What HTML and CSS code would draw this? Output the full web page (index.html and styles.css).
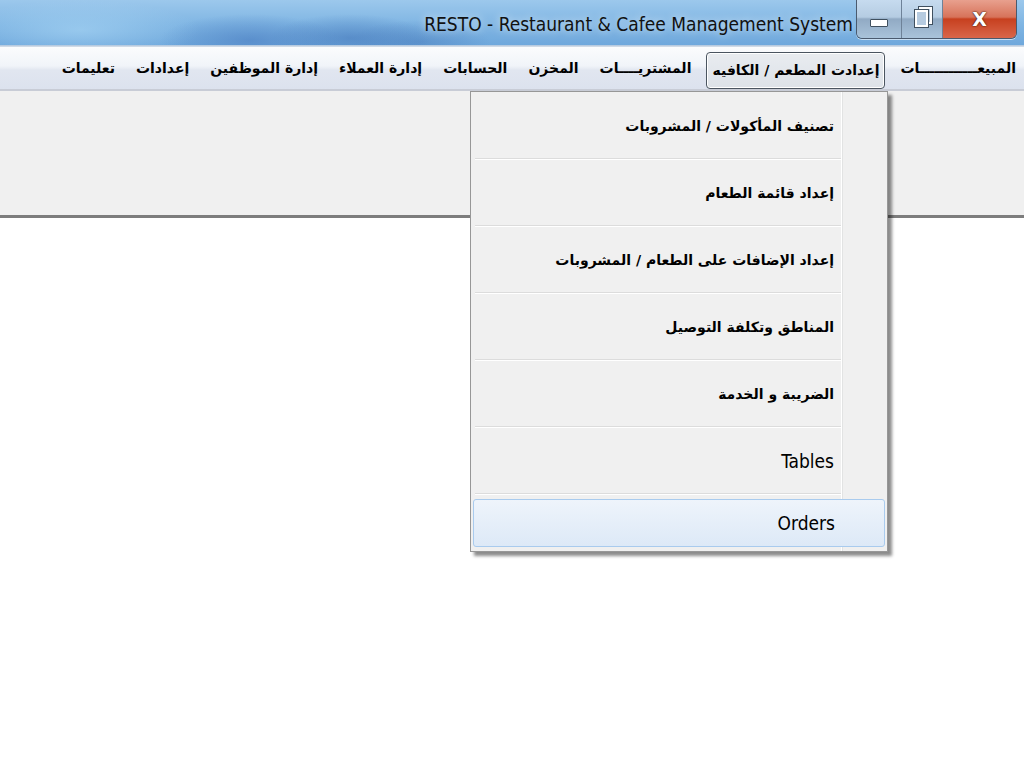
FILE: index.html
```html
<!DOCTYPE html>
<html lang="ar">
  <head>
    <meta charset="UTF-8" />
    <title>RESTO - Restaurant &amp; Cafee Management System</title>
    <link rel="stylesheet" href="styles.css">
  </head>
  <body>
    <div class="titlebar">
      <span class="title">RESTO - Restaurant &amp; Cafee Management System</span>
      <div class="win-buttons">
        <span class="win-btn btn-min"><i class="min-bar"></i></span>
        <span class="win-btn btn-restore"><i class="rest-back"></i><i class="rest-front"></i></span>
        <span class="win-btn btn-close">X</span>
      </div>
    </div>

    <div class="menubar" dir="rtl">
      <span class="menu-item">المبيعــــــــــــات</span>
      <span class="menu-item active">إعدادت المطعم / الكافيه</span>
      <span class="menu-item">المشتريــــات</span>
      <span class="menu-item">المخزن</span>
      <span class="menu-item">الحسابات</span>
      <span class="menu-item">إدارة العملاء</span>
      <span class="menu-item">إدارة الموظفين</span>
      <span class="menu-item">إعدادات</span>
      <span class="menu-item">تعليمات</span>
    </div>

    <div class="toolbar"></div>
    <div class="content"></div>

    <!-- dropdown of the open menu -->
    <div class="dropdown" dir="rtl">
      <div class="drop-item">تصنيف المأكولات / المشروبات</div>
      <div class="drop-item">إعداد قائمة الطعام</div>
      <div class="drop-item">إعداد الإضافات على الطعام / المشروبات</div>
      <div class="drop-item">المناطق وتكلفة التوصيل</div>
      <div class="drop-item">الضريبة و الخدمة</div>
      <div class="drop-item latin">Tables</div>
      <div class="drop-item latin hover">Orders</div>
    </div>
  </body>
</html>
```

FILE: styles.css
```css
:root {
  --panel-bg: #f0f0f0;
  --menu-text: #000;
  --menu-border: #979797;
  --sep-dark: #dcdcdc;
  --hover-border: #a9cbee;
  --narrow: "DejaVu Sans Condensed", "DejaVu Sans", sans-serif;
}
html,
body {
  margin: 0;
  height: 100%;
}
body {
  display: flex;
  flex-direction: column;
  background: #fff;
  font-family: "DejaVu Sans", sans-serif;
  overflow: hidden;
  position: relative;
}

/* Title bar (aero glass look) */
.titlebar {
  height: 45px;
  flex: none;
  display: flex;
  justify-content: flex-end;
  align-items: flex-start;
  padding-right: 7px;
  background:
    radial-gradient(ellipse 90px 26px at 250px 40px, rgba(70, 120, 190, 0.55), transparent),
    radial-gradient(ellipse 80px 24px at 350px 38px, rgba(60, 110, 180, 0.5), transparent),
    radial-gradient(ellipse 70px 22px at 420px 42px, rgba(70, 120, 185, 0.45), transparent),
    radial-gradient(ellipse 120px 30px at 80px 30px, rgba(170, 215, 245, 0.6), transparent),
    linear-gradient(#9cc8ec, #7fb5e3 55%, #6fa8dc);
  border-bottom: 1px solid #b7cbe0;
}
.title {
  font-family: var(--narrow);
  font-stretch: condensed;
  font-size: 19px;
  color: #111;
  margin-top: 13px;
  margin-right: 3px;
  text-shadow: 0 0 8px rgba(255, 255, 255, 0.8);
}
.win-buttons {
  display: flex;
  height: 38px;
  border: 1px solid #4a5a6e;
  border-top: none;
  border-radius: 0 0 6px 6px;
  overflow: hidden;
  box-shadow: 0 1px 0 rgba(255, 255, 255, 0.6);
}
.win-btn {
  display: flex;
  align-items: center;
  justify-content: center;
  height: 100%;
  position: relative;
}
.btn-min,
.btn-restore {
  width: 44px;
  background: linear-gradient(#c6dbef, #b5cce2 45%, #91aac4 50%, #a9c3da);
  border-right: 1px solid #6e8298;
}
.btn-restore {
  width: 40px;
}
.min-bar {
  width: 16px;
  height: 6px;
  margin-top: 8px;
  background: #fff;
  border: 1px solid #40505f;
  border-radius: 1px;
}
.rest-back,
.rest-front {
  position: absolute;
  width: 9px;
  height: 13px;
  border: 2px solid #fff;
  outline: 1px solid #40505f;
  background: #b6cbe0;
}
.rest-back {
  top: 7px;
  left: 17px;
}
.rest-front {
  top: 10px;
  left: 13px;
}
.btn-close {
  width: 73px;
  background: linear-gradient(#e8a08e, #d7735a 45%, #c7401f 50%, #d9664a);
  color: #fff;
  font-family: "DejaVu Sans", sans-serif;
  font-weight: bold;
  font-size: 19px;
  text-shadow: 0 0 2px #3a1a10, 0 0 1px #3a1a10;
}

/* Menu bar */
.menubar {
  height: 42px;
  flex: none;
  display: flex;
  align-items: center;
  gap: 9px;
  padding: 0 2px;
  border-top: 1px solid #d0dae6;
  background: linear-gradient(#fbfcfd, #f1f4f9 45%, #e1e6f0 55%, #dce2ee);
  border-bottom: 2px solid #c8ccd6;
}
.menu-item {
  font-size: 14px;
  font-weight: bold;
  color: var(--menu-text);
  padding: 9px 5px 10px;
  border: 1px solid transparent;
  border-radius: 4px;
  white-space: nowrap;
}
.menu-item.active {
  border-color: #4b5560;
  background: linear-gradient(#e9ecf0, #dde2e8);
  box-shadow: inset 0 0 0 1px #fff;
  margin-top: 4px;
}

/* Toolbar panel below the menu */
.toolbar {
  height: 124px;
  flex: none;
  background: var(--panel-bg);
  border-bottom: 3px solid #7d7d7d;
}
.content {
  flex: 1;
  background: #fff;
}

/* Dropdown */
.dropdown {
  position: absolute;
  left: 470px;
  top: 91px;
  width: 412px;
  padding: 2px;
  background: var(--panel-bg);
  border: 1px solid var(--menu-border);
  box-shadow: 4px 4px 3px rgba(0, 0, 0, 0.45);
  background-image: linear-gradient(to left, transparent 44px, #e2e3e3 44px, #e2e3e3 45px, #fff 45px, #fff 46px, transparent 46px);
}
.drop-item {
  height: 64px;
  display: flex;
  align-items: center;
  padding-right: 7px;
  font-size: 14px;
  font-weight: bold;
  color: #000;
  border-bottom: 1px solid var(--sep-dark);
  box-shadow: 0 1px 0 #fff;
  margin: 0 44px 2px 2px;
}
.drop-item:last-child {
  border-bottom: none;
  box-shadow: none;
}
.drop-item.latin {
  font-family: var(--narrow);
  font-stretch: condensed;
  font-weight: normal;
  font-size: 19px;
}
.drop-item.hover {
  height: 46px;
  margin: 5px 0 2px 0;
  padding-right: 49px;
  border: 1px solid var(--hover-border);
  border-radius: 3px;
  background: linear-gradient(#eef4fb, #dde9f7);
}
```
